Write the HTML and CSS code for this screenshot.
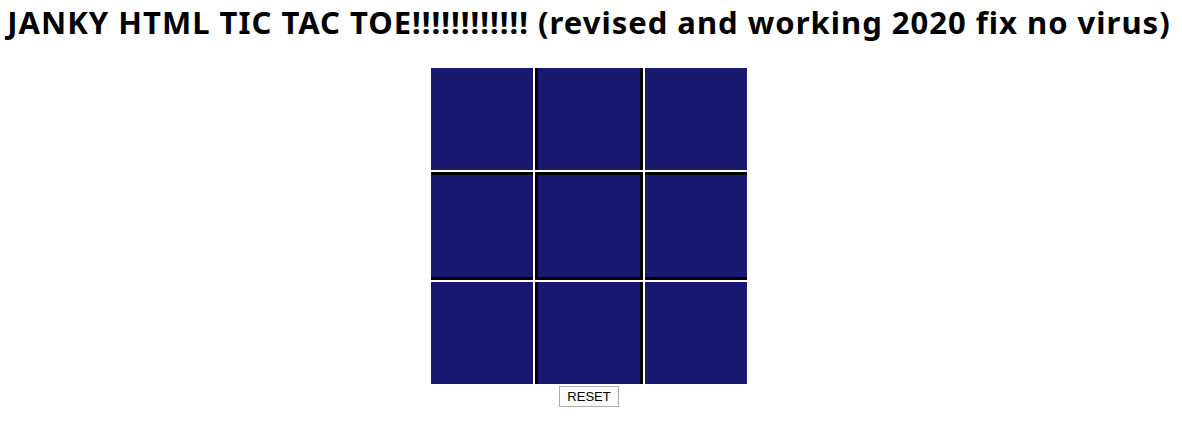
FILE: index.html
```html
<!DOCTYPE html>
<html>
<head>
<meta charset="utf-8">
<title>Tic Tac Toe</title>
<link rel="stylesheet" href="styles.css">
</head>
<body>
<h1 class="title">JANKY HTML TIC TAC TOE!!!!!!!!!!!! (revised and working 2020 fix no virus)</h1>
<div class="board">
  <div class="cell"></div>
  <div class="cell mid-col"></div>
  <div class="cell"></div>
  <div class="cell mid-row"></div>
  <div class="cell mid-row mid-col"></div>
  <div class="cell mid-row"></div>
  <div class="cell"></div>
  <div class="cell mid-col"></div>
  <div class="cell"></div>
</div>
<div class="controls">
  <button class="reset">RESET</button>
</div>
</body>
</html>
```

FILE: styles.css
```css
html, body {
  margin: 0;
  padding: 0;
  background: #ffffff;
}
body {
  width: 1178px;
  font-family: "Liberation Sans", Arial, sans-serif;
}
.title {
  margin: 0;
  padding-top: 2px;
  height: 63px;
  box-sizing: border-box;
  font-family: "Noto Sans", sans-serif;
  font-weight: bold;
  font-size: 31px;
  line-height: 40px;
  letter-spacing: 1px;
  text-align: center;
  white-space: nowrap;
  color: #000;
}
.board {
  margin: 5px auto 0;
  width: 316px;
  display: grid;
  grid-template-columns: 102px 108px 102px;
  grid-template-rows: 102px 108px 102px;
  gap: 2px;
}
.cell {
  box-sizing: border-box;
  background: #191970;
}
.mid-col {
  border-left: 3px solid #000;
  border-right: 3px solid #000;
}
.mid-row {
  border-top: 3px solid #000;
  border-bottom: 3px solid #000;
}
.controls {
  display: flex;
  justify-content: center;
  padding-top: 2px;
}
.reset {
  box-sizing: border-box;
  width: 60px;
  height: 21px;
  padding: 0 6px;
  border: 1px solid #adadad;
  border-radius: 0;
  background: #fbfbfb;
  font-family: "Liberation Sans", Arial, sans-serif;
  font-size: 13px;
  color: #000;
}
```
